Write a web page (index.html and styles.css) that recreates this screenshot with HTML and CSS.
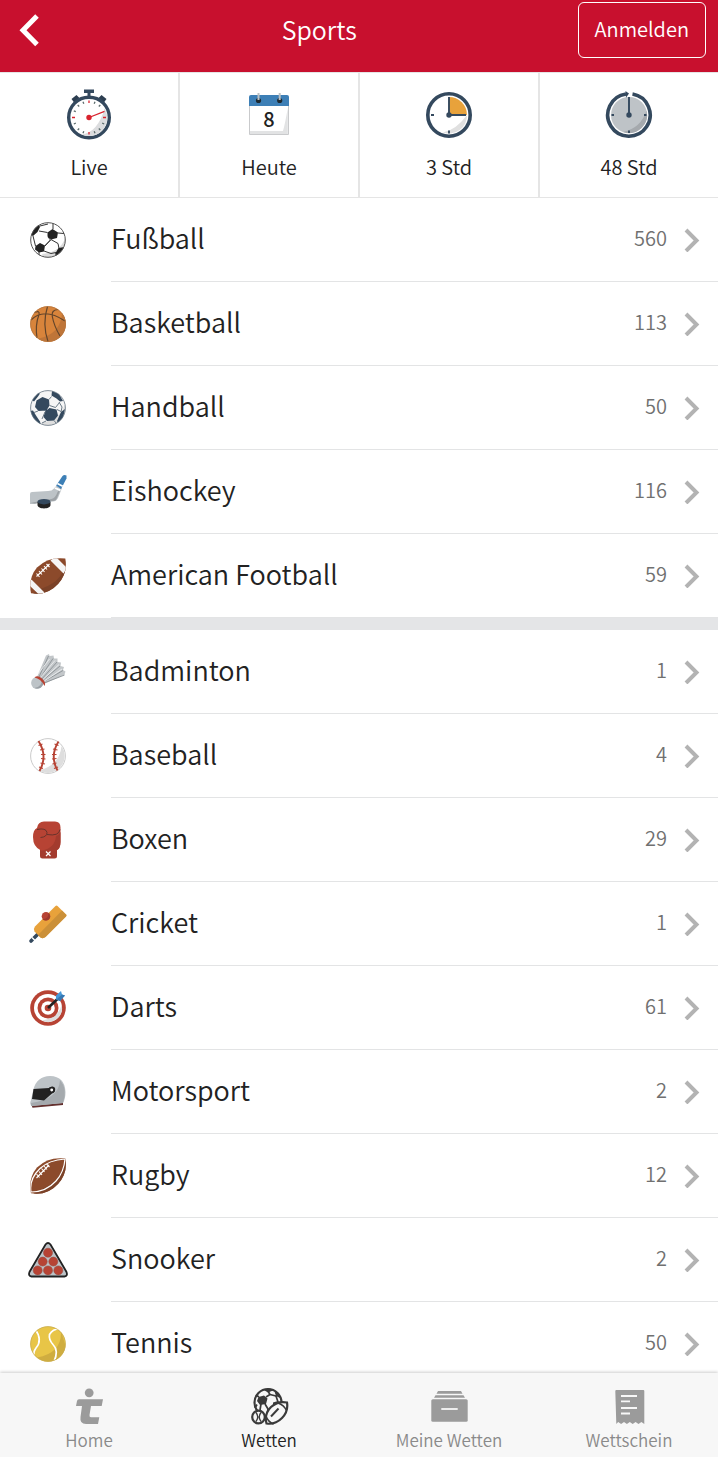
FILE: index.html
```html
<!DOCTYPE html>
<html lang="de">
<head>
<meta charset="utf-8">
<meta name="viewport" content="width=device-width, initial-scale=1">
<title>Sports</title>
<link rel="stylesheet" href="styles.css">
</head>
<body>
<div class="app">
  <header class="header">
    <button class="back" type="button" aria-label="Zurück">
      <svg width="24" height="36" viewBox="0 0 24 36"><path d="M20 4 6 18.200 20 32.500" fill="none" stroke="#fff" stroke-width="5"/></svg>
    </button>
    <h1 class="title">Sports</h1>
    <button class="login" type="button">Anmelden</button>
  </header>

  <nav class="filters" aria-label="Zeitraum">
    <a class="filter" href="#live">
      <svg class="filter-icon" viewBox="0 0 50 54">
        <path d="M20 1.500h10v3.500h-3.500v4h-3v-4H20z" fill="#34495e"/>
        <path d="M7.500 11 12.500 7l3 3-5 5zM42.500 11 37.500 7l-3 3 5 5z" fill="#2c3e50"/>
        <circle cx="25" cy="29.500" r="20.300" fill="#fff" stroke="#34495e" stroke-width="3.400"/>
        <path d="M40.500 20.500A18 18 0 0 1 18 46.500Q34 44 40.500 20.500z" fill="#dcdddf"/>
        <path d="M19 13.800l.8 2M13.700 17l1.500 1.500M9.800 22.800l2 .8M9.800 36l2-.8M13.700 42l1.500-1.500M19 45.200l.8-2M31 13.800l-.8 2M36.300 17l-1.500 1.500M40.200 36l-2-.8M36.300 42l-1.500-1.500M31 45.200l-.8-2" stroke="#5d6d6d" stroke-width="1.300"/>
        <path d="M25 12.500v2.500M8 29.500h3M39 29.500h3M25 44v2.500M25 29.500 40.500 23.300" stroke="#d9232e" stroke-width="1.300"/>
        <circle cx="25" cy="29.500" r="2.700" fill="#d9232e"/>
      </svg>
      <span>Live</span>
    </a>
    <a class="filter" href="#heute">
      <svg class="filter-icon" viewBox="0 0 50 54">
        <path d="M5.500 17h39v29.500h-39z" fill="#fff" stroke="#c9cacc"/>
        <path d="M43.800 20v26H6v-3h33q2-7 4.800-23z" fill="#e2e3e4"/>
        <path d="M5 9q0-2 2-2h36q2 0 2 2v9H5z" fill="#3d7fb6"/>
        <circle cx="14.500" cy="12.500" r="2.600" fill="#1e2930"/><circle cx="35.700" cy="12.500" r="2.600" fill="#1e2930"/>
        <path d="M14.500 5v7M35.700 5v7" stroke="#bcc1c4" stroke-width="2"/>
        <text class="day" x="25" y="39">8</text>
      </svg>
      <span>Heute</span>
    </a>
    <a class="filter" href="#3std">
      <svg class="filter-icon" viewBox="0 0 50 54">
        <circle cx="25" cy="27" r="21.200" fill="#fff" stroke="#34495e" stroke-width="3.600"/>
        <path d="M25 9a18 18 0 0 1 18 18H25z" fill="#e8a23b"/>
        <path d="M43 27a18 18 0 0 1-24 17.500Q32 42 43 27z" fill="#e0e0e0"/>
        <path d="M25 9v18h17M7 27h3M25 42.500v3" fill="none" stroke="#34495e" stroke-width="1.900"/>
        <circle cx="25" cy="27" r="2.700" fill="#34495e"/>
      </svg>
      <span>3 Std</span>
    </a>
    <a class="filter" href="#48std">
      <svg class="filter-icon" viewBox="0 0 50 54">
        <circle cx="25" cy="27" r="18" fill="#bec3c7"/>
        <path d="M42.500 22.500A18 18 0 0 1 19 44Q37 40 42.500 22.500z" fill="#a5a9ad"/>
        <path d="M28.500 6.100A21.200 21.200 0 1 1 22 6" fill="none" stroke="#34495e" stroke-width="3.600"/>
        <path d="M21.500 3 25 5.500l-3 4.300z" fill="#34495e"/>
        <path d="M25 9v18M7.500 27h2.500M40 27h2.500M25 42.500v2.500" stroke="#34495e" stroke-width="1.900"/>
        <circle cx="25" cy="27" r="2.700" fill="#34495e"/>
      </svg>
      <span>48 Std</span>
    </a>
  </nav>

  <main class="content">
    <ul class="list">
      <li><a class="row" href="#fussball">
        <svg class="sport-icon" viewBox="0 0 40 40">
          <clipPath id="ball"><circle cx="20" cy="20" r="17.600"/></clipPath>
          <g clip-path="url(#ball)">
            <circle cx="20" cy="20" r="17.600" fill="#fff"/>
            <path d="M38 14Q35 32 14 34l2 4h12l10-12z" fill="#dcdcdc"/>
            <path d="M19.500 12.500l5-3.500 5.500 3.500-1 5.500-6 1.500-3.500-3zM7.500 26l4.500-3 5 2.500-1 6-5 1-4-3zM3 15l3-7 5-3.500 1 2.500-2.500 5-4.500 4zM27 34l3.500-6 6-1-1 6-6 4z" fill="#222"/>
            <path d="M19.500 12.500 11 11M20 17l2.500 3-5.500 6M5 16l2.500 10M16 31l7 2.500 5-1M23 19.500l7 4 1 5M30 13l6 .5M25 9V3M12 6l8-2M11 32v4M17 25.500l5.500-5.500" fill="none" stroke="#333" stroke-width="1"/>
          </g>
          <circle cx="20" cy="20" r="17.300" fill="none" stroke="#555" stroke-width="1"/>
        </svg>
        <span class="name">Fußball</span><span class="count">560</span>
        <svg class="chevron" viewBox="0 0 16 24"><path d="M2 2l10.500 10.500L2 23"/></svg></a></li>
      <li><a class="row" href="#basketball">
        <svg class="sport-icon" viewBox="0 0 40 40">
          <circle cx="20" cy="20" r="17.800" fill="#d8843b"/>
          <path d="M34 9Q33 30 10 34.800A17.800 17.800 0 0 0 34 9z" fill="#bf7538"/>
          <path d="M3 16Q16 3 37 17M6.500 8.500Q12 6 11 10.500 7 21 9 34M19.500 2.500Q14 20 20 37.500M30 5.500Q23 6 24.300 12.500 26 22 32 32" fill="none" stroke="#63452b" stroke-width="1.200"/>
          <circle cx="20" cy="20" r="17.400" fill="none" stroke="#b57640" stroke-width=".8"/>
        </svg>
        <span class="name">Basketball</span><span class="count">113</span>
        <svg class="chevron" viewBox="0 0 16 24"><path d="M2 2l10.500 10.500L2 23"/></svg></a></li>
      <li><a class="row" href="#handball">
        <svg class="sport-icon" viewBox="0 0 40 40">
          <g clip-path="url(#ball)">
            <circle cx="20" cy="20" r="18" fill="#f5f5f5"/>
            <path d="M38 12Q35 31 13 35l4 4h12l10-13z" fill="#dedede"/>
            <g fill="#34495e">
              <path d="M8.500 12.500l6-3.500 6.500 2.500.5 6-3 5-8 .5-3.500-4zM17 23.500l4.500-3.500 7 1.500 1.500 6-4 5-7 .500-3.500-4zM24 3l7 3 4 7-3 .500-3.500-3-5-3zM2 23l3-.5 3 5 4 6 1 4-8-7zM4 12l6-7 2 .500-2 3-4 5zM33 24l4-3-2 9-5 5-1-2z"/>
            </g>
            <path d="M21.500 17.500l6 2 4-5M21 11.500l2.500-3M29 21.500l4 2M10 23l-4 1.500M17 24l-3 7M18 33l-4 2M26 32.500l2.500 3M31 14l3 5-1 5" fill="none" stroke="#6a7885" stroke-width="1"/>
          </g>
          <circle cx="20" cy="20" r="17.400" fill="none" stroke="#657382" stroke-width=".8"/>
        </svg>
        <span class="name">Handball</span><span class="count">50</span>
        <svg class="chevron" viewBox="0 0 16 24"><path d="M2 2l10.500 10.500L2 23"/></svg></a></li>
      <li><a class="row" href="#eishockey">
        <svg class="sport-icon" viewBox="0 0 40 40">
          <path d="M2 22q0-2 2-2l16-1q4 0 6-2.500l3-3.500 5 3-4 10q-2 3.500-5 3.500-11 0-18 2.500H2z" fill="#bdc3c7"/>
          <path d="M2.500 31q12-3 21-4 4-1 6-7l4-5-4.500 11q-1 3-4 3-10 0-18 2.500z" fill="#9da2a6"/>
          <path d="M28.200 13.500 34.500 4q1.500-1.500 4-.5v3L33 17z" fill="#3d7fb6"/>
          <path d="M29.800 10.800l5.300 2.800-.8 1.500-5.300-2.800zM27.500 15.200l5.500 2.300-1 1.700-5.500-2.400z" fill="#fff"/>
          <path d="M9.500 30v3c0 4.500 13 4.500 13 0v-3z" fill="#222"/><ellipse cx="16" cy="29.700" rx="6.500" ry="2.700" fill="#34495e"/>
        </svg>
        <span class="name">Eishockey</span><span class="count">116</span>
        <svg class="chevron" viewBox="0 0 16 24"><path d="M2 2l10.500 10.500L2 23"/></svg></a></li>
      <li><a class="row" href="#american-football">
        <svg class="sport-icon" viewBox="0 0 40 40">
          <clipPath id="gridiron"><path d="M3 37.300Q0 22 9 11.500 20 .5 37.300 2.500 40 17 30 28 19 40 3 37.300z"/></clipPath>
          <g clip-path="url(#gridiron)">
            <path d="M0 0h40v40H0z" fill="#8c4a2b"/><path d="M36 10Q34 27 9 34L4 39h20l16-18z" fill="#7b4228"/>
            <path d="M22.500 4.500 35.500 17.500 39 12 27.500.5zM3.500 23.500l13 13-4 3.500L.500 28.500z" fill="#f5f5f5"/>
            <path d="M8.500 20.500 21.500 8M8.500 17.500l3 3.500M11 15l3 3.500M13.500 12.500l3 3.500M16 10l3 3.500M18.500 8l3 3" stroke="#fff" stroke-width="1.100"/>
          </g>
        </svg>
        <span class="name">American Football</span><span class="count">59</span>
        <svg class="chevron" viewBox="0 0 16 24"><path d="M2 2l10.500 10.500L2 23"/></svg></a></li>
    </ul>

    <ul class="list">
      <li><a class="row" href="#badminton">
        <svg class="sport-icon" viewBox="0 0 40 40">
          <path d="M9 25 18 3.500l3-1.500.5 2 4-.5.5 3 3.500 0v3.500l3.500.5-.5 3.500 3.500 1-1 3 2.500 1.500-1 3L16 32z" fill="#c3c7ca"/>
          <path d="M10.500 26 20.500 4M11.500 27 25 6.500M13 28 29 10M14 29l18-15M15 30l20-11.500M16 31l20.500-8" stroke="#92989c" stroke-width="1"/>
          <path d="M10 22 21.500 7M12 26 27 8.500M14 28.500 31 12.500M15 30l19-13" stroke="#eceeef" stroke-width=".9" fill="none"/>
          <circle cx="9" cy="31" r="5.900" fill="#bdc3c7"/><path d="M13.500 27q1 8-7 9 6 2 9-4z" fill="#999fa4"/>
          <path d="M6.500 25.500q3-3 7.500 1t2.500 7.500q-2-4-4.500-6t-5.500-2.500z" fill="#b74334"/>
        </svg>
        <span class="name">Badminton</span><span class="count">1</span>
        <svg class="chevron" viewBox="0 0 16 24"><path d="M2 2l10.500 10.500L2 23"/></svg></a></li>
      <li><a class="row" href="#baseball">
        <svg class="sport-icon" viewBox="0 0 40 40">
          <circle cx="20" cy="20" r="17.400" fill="#fff" stroke="#c4c4c4" stroke-width=".9"/>
          <path d="M33.500 10Q32 29 11 34.500A17 17 0 0 0 33.500 10z" fill="#dedede"/>
          <path d="M10.500 5Q20 20 11.500 35M30.500 5.500q-9 14.500-1 29" fill="none" stroke="#b74334" stroke-width="1.900"/>
          <path d="M10.500 9.500l4-1.500M12 14l4.500-1M13 18.500h4.500M13 22.500l4.500.5M12.500 27l4.500 1M11 31l4 1.500M26.500 8l4 1.500M25 13l4.500 1M24 18.500h4.500M24 23l4.500-.5M24.500 28l4-1M26 32.500l4-1.500" stroke="#b74334" stroke-width="1.200"/>
        </svg>
        <span class="name">Baseball</span><span class="count">4</span>
        <svg class="chevron" viewBox="0 0 16 24"><path d="M2 2l10.500 10.500L2 23"/></svg></a></li>
      <li><a class="row" href="#boxen">
        <svg class="sport-icon" viewBox="0 0 40 40">
          <path d="M12 28h17v8q0 2.500-2.500 2.500h-12Q12 38.500 12 36z" fill="#a33b2e"/>
          <path d="M9 8q1-6.500 7-6.500h11q5.500 0 5.500 6V22q0 7-4.500 8.500H13Q5 27 5 17q0-7 4-9z" fill="#b74334"/>
          <path d="M32.500 12v10q0 7-4.500 8.500H14Q27 28 28 16q3-1 4.500-4z" fill="#a33b2e"/>
          <path d="M9 9.500q9-2 10 3 0 4.500-6.500 5M19 14.500q12 2 13-5" fill="none" stroke="#69332c" stroke-width="1"/>
          <path d="M18 31.500l4.500 4.500M22.500 31.500 18 36" stroke="#fff" stroke-width="1.200"/>
        </svg>
        <span class="name">Boxen</span><span class="count">29</span>
        <svg class="chevron" viewBox="0 0 16 24"><path d="M2 2l10.500 10.500L2 23"/></svg></a></li>
      <li><a class="row" href="#cricket">
        <svg class="sport-icon" viewBox="0 0 40 40">
          <path d="M10.500 29.500 3 37" stroke="#34495e" stroke-width="3.600" stroke-linecap="round"/>
          <path d="M4 33.500l3.500 3.500" stroke="#fff" stroke-width="1.400"/>
          <path d="M27.500 2q1-1 2 0l8.500 8.500q1 1 0 2L17.500 33q-2.500 2-5 .5l-6-6q-1.500-2.500.5-5z" fill="#e8a23b"/>
          <path d="M34 6.500l4 4q1 1 0 2L17.500 33q-2.500 2-5 .5L10 31z" fill="#cb9038"/>
          <circle cx="18" cy="12.300" r="4.300" fill="#b74334"/><path d="M20.500 9q0 6-6 6.200 3 2.800 6.500 0 2.500-3-.5-6.200z" fill="#9e392d"/>
        </svg>
        <span class="name">Cricket</span><span class="count">1</span>
        <svg class="chevron" viewBox="0 0 16 24"><path d="M2 2l10.500 10.500L2 23"/></svg></a></li>
      <li><a class="row" href="#darts">
        <svg class="sport-icon" viewBox="0 0 40 40">
          <circle cx="20" cy="20" r="17.800" fill="#b74334"/><circle cx="20" cy="20" r="14" fill="#fff"/>
          <path d="M33.700 17A14 14 0 0 1 14 32.600Q30 30 33.700 17z" fill="#dedede"/>
          <circle cx="20" cy="20" r="10.500" fill="#b74334"/><circle cx="20" cy="20" r="6.800" fill="#fff"/><circle cx="20" cy="20" r="3.300" fill="#b74334"/>
          <path d="M20 20l10-9.500" stroke="#222" stroke-width="2.600"/>
          <path d="M28 7.500 33 3l1 3.500 3 1L32 13l-4-1.500z" fill="#4698d8"/><path d="M28.500 11.500 34 6.500l3 1L32 13z" fill="#3778b2"/>
        </svg>
        <span class="name">Darts</span><span class="count">61</span>
        <svg class="chevron" viewBox="0 0 16 24"><path d="M2 2l10.500 10.500L2 23"/></svg></a></li>
      <li><a class="row" href="#motorsport">
        <svg class="sport-icon" viewBox="0 0 40 40">
          <path d="M3.500 33 35 30.500V33L4.500 35.800z" fill="#63302e"/>
          <path d="M5.500 17Q9 4.500 22 4q15 .5 15.500 16 0 7-2.500 11L4 34q-3-2-1-6z" fill="#bdc3c7"/>
          <path d="M32 8Q31 27 3 31v3l32-3q5-14-3-23z" fill="#a5aaae"/>
          <path d="M5.500 17 21 16q4-3 6 0 1 4-3 5.500l-8 7-12-1.500z" fill="#222"/>
          <circle cx="23.700" cy="18" r="2.300" fill="#fff" stroke="#222" stroke-width="1.700"/>
        </svg>
        <span class="name">Motorsport</span><span class="count">2</span>
        <svg class="chevron" viewBox="0 0 16 24"><path d="M2 2l10.500 10.500L2 23"/></svg></a></li>
      <li><a class="row" href="#rugby">
        <svg class="sport-icon" viewBox="0 0 40 40">
          <g clip-path="url(#gridiron)">
            <path d="M0 0h40v40H0z" fill="#8c4a2b"/><path d="M37 3Q34 27 9 35L4 39h20l16-18z" fill="#7b4228"/>
            <path d="M3 36Q1 23 12 12.500 21 4 37 3M3 36Q18 36 28 25q8-9 9-22" fill="none" stroke="#fff" stroke-width="1.200"/>
            <path d="M8.500 22 21 9M8.500 18l3 3.500M11 15.500l3 3.500M13.500 12.500l3 3.500M16 10l3 3.500M18.500 8l3 3" stroke="#fff" stroke-width="1.100"/>
          </g>
        </svg>
        <span class="name">Rugby</span><span class="count">12</span>
        <svg class="chevron" viewBox="0 0 16 24"><path d="M2 2l10.500 10.500L2 23"/></svg></a></li>
      <li><a class="row" href="#snooker">
        <svg class="sport-icon" viewBox="0 0 40 40">
          <path d="M17.500 4.500q2.500-3 5 0L38.500 32q1.500 4-2 4.500h-33q-3.500-.5-2-4.500z" fill="#bdc3c7" stroke="#222" stroke-width="1.800"/>
          <g fill="#b74334" stroke="#9b4a40" stroke-width=".6"><circle cx="20" cy="12.700" r="4.500"/><circle cx="14.700" cy="21.600" r="4.500"/><circle cx="25.300" cy="21.600" r="4.500"/><circle cx="9.700" cy="30.400" r="4.500"/><circle cx="20" cy="30.400" r="4.500"/><circle cx="30.300" cy="30.400" r="4.500"/></g>
        </svg>
        <span class="name">Snooker</span><span class="count">2</span>
        <svg class="chevron" viewBox="0 0 16 24"><path d="M2 2l10.500 10.500L2 23"/></svg></a></li>
      <li><a class="row" href="#tennis">
        <svg class="sport-icon" viewBox="0 0 40 40">
          <g clip-path="url(#ball)">
            <circle cx="20" cy="20" r="18" fill="#e8c547"/><path d="M33 7q1 22-24 26.500L20 40l20-10z" fill="#cfad40"/>
            <path d="M7 5q8 11 1 19-3 4-2 9M34 5q-9-1-12.500 5.500-1 5 3.500 10 6 6 1 17" fill="none" stroke="#fff" stroke-width="1.700"/>
          </g>
          <circle cx="20" cy="20" r="17.400" fill="none" stroke="#c8ab4c" stroke-width=".8"/>
        </svg>
        <span class="name">Tennis</span><span class="count">50</span>
        <svg class="chevron" viewBox="0 0 16 24"><path d="M2 2l10.500 10.500L2 23"/></svg></a></li>
    </ul>
  </main>

  <nav class="tabbar" aria-label="Hauptnavigation">
    <a class="tab" href="#home">
      <svg class="tab-icon" viewBox="0 0 40 40" fill="#9b9b9b"><circle cx="20.200" cy="5.800" r="4.400"/><path d="M10 12.300h24L32.700 19H22l-1.500 9q-.3 2.300 1.500 2.300h8.300L29 37H17q-6.500 0-5.500-7l1.500-11H7l1-5q.3-1.700 2-1.700z"/></svg>
      <span>Home</span>
    </a>
    <a class="tab tab-active" href="#wetten" aria-current="page">
      <svg class="tab-icon" viewBox="0 0 40 40" fill="none" stroke="#3a3a3a" stroke-width="2.200">
        <circle cx="19" cy="15.500" r="13.500"/>
        <path d="M8 17.500 6 21M10 10 7 8M17 10l4-2.500M16 17l3 5-1 6M21 7.500l-3-5M21 7.500l6 1.500M27 9l2 6M12 17l-1 6" stroke-width="1.700"/>
        <path d="M9.500 10l5.500-1.500 3.500 3-1.500 5.500-6 1-3-4zM14 2.500l7-1 3 2-5 2zM25 3l5 4 1 4-4-2zM24 15.500l5-1.500 2 2-7 4z" fill="#3a3a3a" stroke="none"/>
        <circle cx="9.500" cy="30" r="6.300" fill="#f7f7f7"/>
        <path d="M7 25.500q3.500 4.500 0 9M12 25.500q-3.500 4.500 0 9" stroke-width="1.400"/>
        <path d="M17.500 36.500Q15 27 22 20q7-6.500 16-4.500 1.500 9-5 15.500-7 7-15.500 5.500z" fill="#f7f7f7"/>
        <path d="M29 16q6 2 8.500 7.500M17 29q2 6 7.500 8" stroke-width="1.500"/>
        <path d="M22 29.500l7.500-8" stroke-width="2"/>
      </svg>
      <span>Wetten</span>
    </a>
    <a class="tab" href="#meine-wetten">
      <svg class="tab-icon" viewBox="0 0 40 40" fill="#9b9b9b"><path d="M9 4h23l1.500 2.700h-26zM6.500 8.300h28l1.500 2.400H5z"/><rect x="2.300" y="12.300" width="36.400" height="22.400" rx="1.500"/><path d="M12.300 22h16.400" stroke="#f7f7f7" stroke-width="1.800"/></svg>
      <span>Meine Wetten</span>
    </a>
    <a class="tab" href="#wettschein">
      <svg class="tab-icon" viewBox="0 0 40 40" fill="#9b9b9b"><path d="M6.300 4q0-1 1-1h27q1 0 1 1v33l-2.900-2-2.900 2-2.900-2-2.900 2-2.900-2-2.900 2-2.900-2-2.900 2-2.900-2-1.900 2z"/><path d="M12 9h16M12 14.300h9M12 21h16M12 26.500h9" stroke="#f7f7f7" stroke-width="1.800"/></svg>
      <span>Wettschein</span>
    </a>
  </nav>
</div>
</body>
</html>
```
FILE: styles.css
```css
* {
  box-sizing: border-box;
}

body {
  margin: 0;
  background: #fff;
  color: #222;
  font-family: "Noto Sans CJK SC", "Noto Sans", sans-serif;
  font-weight: 350;
}

a {
  color: inherit;
  text-decoration: none;
}

button {
  padding: 0;
  border: 0;
  background: none;
  color: inherit;
  font: inherit;
  cursor: pointer;
}

svg {
  display: block;
}

.app {
  display: flex;
  flex-direction: column;
  height: 100vh;
}

.header {
  display: grid;
  flex: none;
  grid-template-columns: 44px 1fr auto;
  align-items: center;
  padding: 2px 12px 14px 17px;
  background: #c8102e;
  color: #fff;
}

.title {
  margin: 0;
  padding-bottom: 2px;
  font-size: 25px;
  font-weight: inherit;
  line-height: 36px;
  text-align: center;
}

.login {
  padding: 0 16px 2px;
  border: 1px solid #fff;
  border-radius: 6px;
  font-size: 20px;
  line-height: 52px;
}

.filters {
  display: grid;
  flex: none;
  grid-template-columns: repeat(4, 1fr);
  gap: 2px;
  border-top: 1px solid #e5e5e5;
  border-bottom: 1px solid #e5e5e5;
  background: #e5e5e5;
}

.filter {
  display: flex;
  flex-direction: column;
  align-items: center;
  gap: 8px;
  padding: 15px 0 14px;
  background: #fff;
  font-size: 20px;
  line-height: 33px;
}

.filter-icon {
  width: 50px;
  height: 54px;
}

.day {
  fill: #222;
  font-size: 20px;
  font-weight: 500;
  text-anchor: middle;
}

.content {
  flex: 1;
  min-height: 0;
  overflow-y: auto;
  scrollbar-width: none;
}

.list {
  margin: 0;
  padding: 0;
  list-style: none;
}

.list + .list {
  border-top: 12px solid #e4e5e7;
}

.row {
  display: grid;
  grid-template-columns: 83px 1fr auto 33px;
  align-items: center;
  height: 84px;
  padding-left: 28px;
  padding-right: 18px;
  background: linear-gradient(#e3e4e5, #e3e4e5) 111px 100% / 100% 1px no-repeat;
}

.sport-icon {
  width: 40px;
  height: 40px;
}

.name {
  padding-bottom: 4px;
  font-size: 27px;
  line-height: 40px;
}

.count {
  padding-bottom: 4px;
  color: #707070;
  font-size: 20px;
  line-height: 30px;
}

.chevron {
  justify-self: end;
  width: 16px;
  height: 24px;
  fill: none;
  stroke: #b3b3b3;
  stroke-width: 4;
}

.tabbar {
  display: grid;
  position: relative;
  flex: none;
  grid-template-columns: repeat(4, 1fr);
  gap: 2px;
  background: #f7f7f7;
  box-shadow: 0 -1px 3px rgba(0, 0, 0, 0.2);
}

.tab {
  display: flex;
  flex-direction: column;
  align-items: center;
  padding: 14px 0 4px;
  color: #8a8a8a;
  font-size: 17px;
  line-height: 26px;
}

.tab-active {
  color: #222;
}

.tab-icon {
  width: 40px;
  height: 40px;
}
```
